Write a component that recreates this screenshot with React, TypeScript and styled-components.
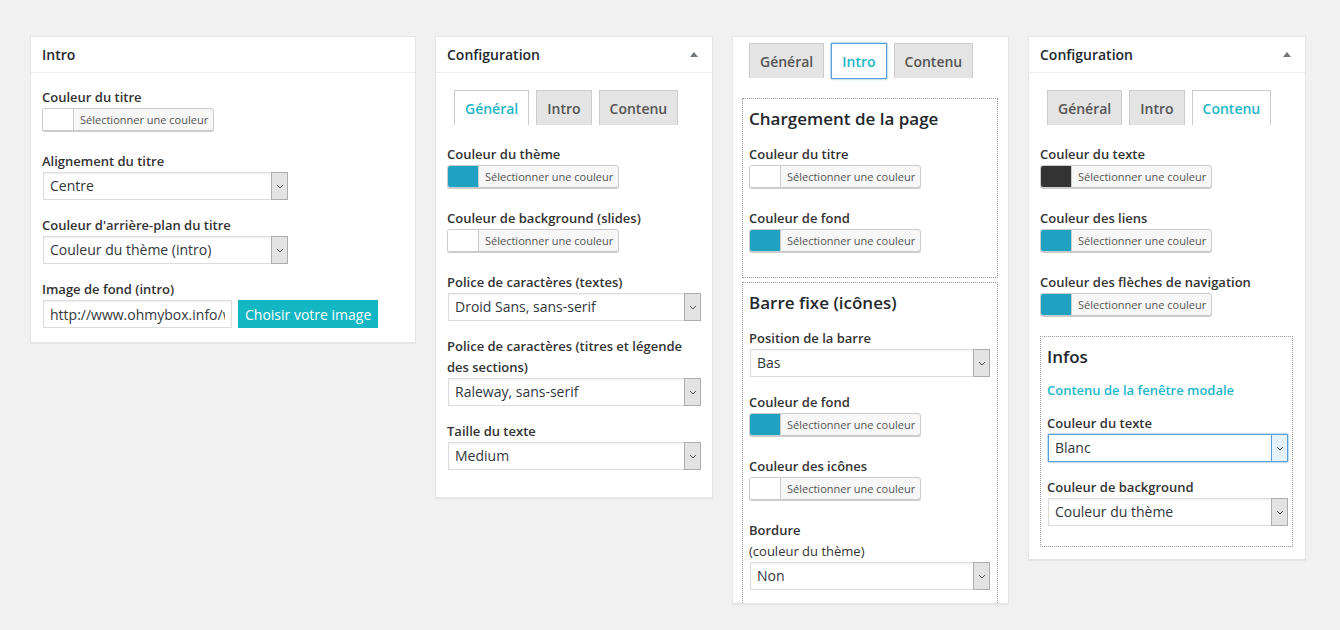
import React from "react";
import styled, { createGlobalStyle } from "styled-components";

const TEAL = "#1fa1c2";
const TAB_TEAL = "#1cb7c9";

const GlobalStyle = createGlobalStyle`
  html, body {
    margin: 0;
    padding: 0;
    background: #f1f1f1;
  }
  body {
    font-family: "Open Sans", "Liberation Sans", sans-serif;
    color: #333;
  }
  * {
    box-sizing: border-box;
  }
`;

const ColorField = ({ label, color = "#fff" }: { label: string; color?: string }) => (
  <Field $mb={20}>
    <Label>{label}</Label>
    <ColorButton>
      <Swatch $c={color} />
      <ColorText>Sélectionner une couleur</ColorText>
    </ColorButton>
  </Field>
);

const SelectField = ({
  label,
  value,
  width,
  focus,
  note,
}: {
  label: string;
  value: string;
  width: number;
  focus?: boolean;
  note?: string;
}) => (
  <Field $mb={15}>
    <Label>{label}</Label>
    {note && <Note>{note}</Note>}
    <Select $w={width} $focus={focus}>
      <SelectValue>{value}</SelectValue>
      <Arrow $focus={focus}>
        <svg width="8" height="5" viewBox="0 0 8 5">
          <path d="M1 1l3 3 3-3" fill="none" stroke="#555" strokeWidth="1" />
        </svg>
      </Arrow>
    </Select>
  </Field>
);

const TabBar = ({ active, focus }: { active: string; focus?: boolean }) => (
  <Tabs>
    {["Général", "Intro", "Contenu"].map((t) => (
      <Tab key={t} $active={t === active} $focus={focus && t === active}>
        {t}
      </Tab>
    ))}
  </Tabs>
);

const App = () => {
  return (
    <Page>
      <GlobalStyle />

      <Panel $w={386}>
        <Header>Intro</Header>
        <Body $pad="14px 12px 14px 11px">
          <ColorField label="Couleur du titre" />
          <SelectField label="Alignement du titre" value="Centre" width={245} />
          <SelectField
            label="Couleur d'arrière-plan du titre"
            value="Couleur du thème (intro)"
            width={245}
          />
          <Field $mb={0}>
            <Label>Image de fond (intro)</Label>
            <Row>
              <TextInput readOnly value="http://www.ohmybox.info/wp-content/uploads/intro.jpg" />
              <PrimaryButton>Choisir votre image</PrimaryButton>
            </Row>
          </Field>
        </Body>
      </Panel>

      <Panel $w={278}>
        <Header>
          Configuration
          <Toggle />
        </Header>
        <Body $pad="17px 12px 12px 11px">
          <TabBar active="Général" />
          <ColorField label="Couleur du thème" color={TEAL} />
          <ColorField label="Couleur de background (slides)" />
          <SelectField label="Police de caractères (textes)" value="Droid Sans, sans-serif" width={253} />
          <SelectField
            label="Police de caractères (titres et légende des sections)"
            value="Raleway, sans-serif"
            width={253}
          />
          <SelectField label="Taille du texte" value="Medium" width={253} />
        </Body>
      </Panel>

      <Panel $w={277} $h={568}>
        <Body $pad="6px 10px 0 9px">
          <TabBar active="Intro" focus />
          <Box $mb={4}>
            <BoxTitle>Chargement de la page</BoxTitle>
            <ColorField label="Couleur du titre" />
            <ColorField label="Couleur de fond" color={TEAL} />
          </Box>
          <Box>
            <BoxTitle>Barre fixe (icônes)</BoxTitle>
            <SelectField label="Position de la barre" value="Bas" width={240} />
            <ColorField label="Couleur de fond" color={TEAL} />
            <ColorField label="Couleur des icônes" />
            <SelectField label="Bordure" note="(couleur du thème)" value="Non" width={240} />
          </Box>
        </Body>
      </Panel>

      <Panel $w={278}>
        <Header>
          Configuration
          <Toggle />
        </Header>
        <Body $pad="17px 12px 12px 11px">
          <TabBar active="Contenu" />
          <ColorField label="Couleur du texte" color="#333" />
          <ColorField label="Couleur des liens" color={TEAL} />
          <ColorField label="Couleur des flèches de navigation" color={TEAL} />
          <Box>
            <BoxTitle $mb={11}>Infos</BoxTitle>
            <SubTitle>Contenu de la fenêtre modale</SubTitle>
            <SelectField label="Couleur du texte" value="Blanc" width={240} focus />
            <SelectField label="Couleur de background" value="Couleur du thème" width={240} />
          </Box>
        </Body>
      </Panel>
    </Page>
  );
};

export default App;

const Page = styled.div`
  display: flex;
  align-items: flex-start;
  gap: 19px;
  padding: 36px 0 0 30px;
  height: 630px;
  overflow: hidden;
`;

const Panel = styled.div<{ $w: number; $h?: number }>`
  width: ${(p) => p.$w}px;
  ${(p) => (p.$h ? `height: ${p.$h}px; overflow: hidden;` : "")}
  flex-shrink: 0;
  background: #fff;
  border: 1px solid #e5e5e5;
  box-shadow: 0 1px 1px rgba(0, 0, 0, 0.04);
`;

const Header = styled.div`
  height: 36px;
  display: flex;
  align-items: center;
  justify-content: space-between;
  padding: 0 12px 0 11px;
  border-bottom: 1px solid #eee;
  font-size: 14px;
  font-weight: 600;
  color: #23282d;
`;

const Toggle = styled.span`
  width: 0;
  height: 0;
  border-left: 4px solid transparent;
  border-right: 4px solid transparent;
  border-bottom: 5px solid #72777c;
  margin-right: 2px;
`;

const Body = styled.div<{ $pad: string }>`
  padding: ${(p) => p.$pad};
`;

const Tabs = styled.div`
  display: flex;
  gap: 7px;
  padding-left: 7px;
  margin-bottom: 19px;
`;

const Tab = styled.div<{ $active?: boolean; $focus?: boolean }>`
  height: ${(p) => (p.$focus ? 36 : 35)}px;
  padding: 0 10px;
  display: flex;
  align-items: center;
  font-size: 14px;
  font-weight: 600;
  border: 1px solid ${(p) => (p.$focus ? "#5b9dd9" : "#ccc")};
  border-bottom: ${(p) => (p.$focus ? "1px solid #5b9dd9" : "none")};
  box-shadow: ${(p) => (p.$focus ? "0 0 2px rgba(30, 140, 190, 0.8)" : "none")};
  background: ${(p) => (p.$active ? "#fff" : "#e4e4e4")};
  color: ${(p) => (p.$active ? TAB_TEAL : "#555")};
`;

const Field = styled.div<{ $mb: number }>`
  margin-bottom: ${(p) => p.$mb}px;
`;

const Label = styled.div`
  font-size: 13px;
  font-weight: 600;
  line-height: 21px;
  color: #333;
`;

const Note = styled.div`
  font-size: 13px;
  line-height: 20px;
  color: #333;
  margin-bottom: 1px;
`;

const ColorButton = styled.div`
  display: flex;
  width: max-content;
  height: 23px;
  border: 1px solid #ccc;
  border-radius: 3px;
  box-shadow: 0 1px 0 #ccc;
  overflow: hidden;
  background: #f7f7f7;
`;

const Swatch = styled.span<{ $c: string }>`
  width: 31px;
  background: ${(p) => p.$c};
  border-right: 1px solid #ccc;
`;

const ColorText = styled.span`
  padding: 0 5px 0 6px;
  font-size: 11px;
  line-height: 21px;
  color: #555;
`;

const Select = styled.div<{ $w: number; $focus?: boolean }>`
  width: ${(p) => p.$w}px;
  height: 28px;
  margin-left: 1px;
  display: flex;
  background: #fff;
  border: 1px solid ${(p) => (p.$focus ? "#5b9dd9" : "#ddd")};
  box-shadow: ${(p) =>
    p.$focus ? "0 0 2px rgba(30, 140, 190, 0.8)" : "inset 0 1px 2px rgba(0, 0, 0, 0.07)"};
`;

const SelectValue = styled.span`
  flex: 1;
  padding-left: 6px;
  font-size: 14px;
  line-height: 26px;
  color: #32373c;
  white-space: nowrap;
  overflow: hidden;
`;

const Arrow = styled.span<{ $focus?: boolean }>`
  width: 17px;
  margin: -1px -1px -1px 0;
  display: flex;
  align-items: center;
  justify-content: center;
  background: ${(p) => (p.$focus ? "#e5f1fb" : "#e3e3e3")};
  border: 1px solid ${(p) => (p.$focus ? "#5b9dd9" : "#adadad")};
`;

const Row = styled.div`
  display: flex;
  gap: 6px;
  margin-left: 1px;
`;

const TextInput = styled.input`
  width: 189px;
  height: 28px;
  padding: 0 6px;
  border: 1px solid #ddd;
  box-shadow: inset 0 1px 2px rgba(0, 0, 0, 0.07);
  font-family: "Open Sans", "Liberation Sans", sans-serif;
  font-size: 14px;
  color: #32373c;
  outline: none;
`;

const PrimaryButton = styled.button`
  height: 28px;
  padding: 0 7px;
  border: none;
  background: #13b6c3;
  color: #fff;
  font-family: "Open Sans", "Liberation Sans", sans-serif;
  font-size: 14px;
`;

const Box = styled.div<{ $mb?: number }>`
  border: 1px dotted #999;
  padding: 8px 6px 5px;
  margin-bottom: ${(p) => p.$mb ?? 0}px;
`;

const BoxTitle = styled.div<{ $mb?: number }>`
  font-size: 17px;
  font-weight: 600;
  line-height: 24px;
  color: #23282d;
  margin-bottom: ${(p) => p.$mb ?? 13}px;
`;

const SubTitle = styled.div`
  font-size: 13px;
  font-weight: 600;
  line-height: 21px;
  color: ${TAB_TEAL};
  margin-bottom: 12px;
`;
